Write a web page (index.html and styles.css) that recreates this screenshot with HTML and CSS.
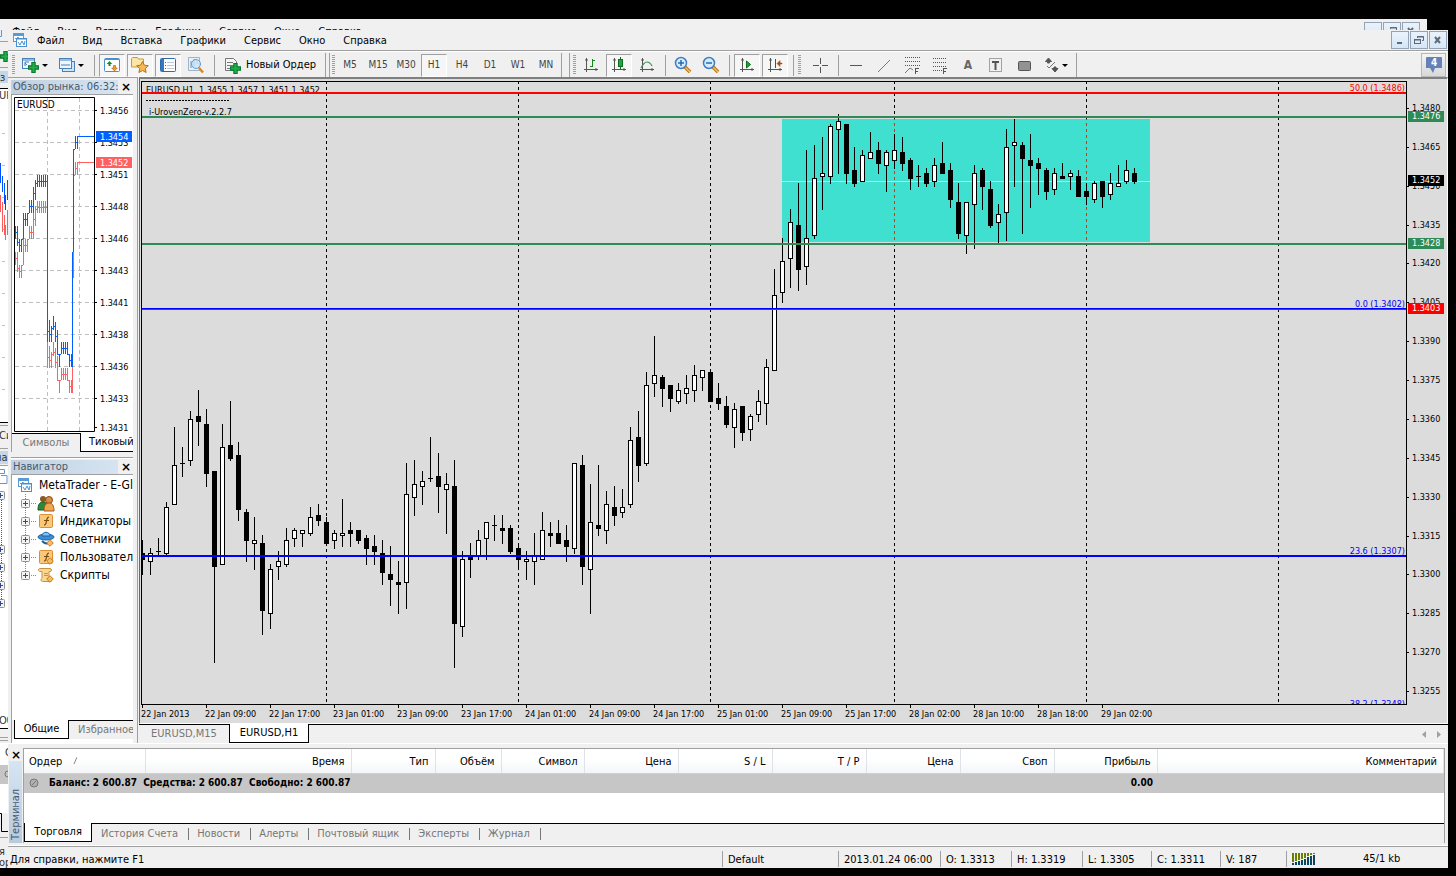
FILE: index.html
```html
<!DOCTYPE html>
<html lang="ru">
<head>
<meta charset="utf-8">
<title>MetaTrader - EURUSD,H1</title>
<link rel="stylesheet" href="styles.css">
</head>
<body>
<svg class="defs" width="0" height="0" aria-hidden="true">
  <defs>
    <symbol id="app" viewBox="0 0 16 16">
      <rect x="1.500" y="1.500" width="10" height="8" fill="#fff" stroke="#5b9bd5"/><path d="M2 3h9" stroke="#5b9bd5" stroke-width="2"/>
      <path d="M3 6l1 1 2-2 1 2" fill="none" stroke="#5b9bd5"/>
      <rect x="4.500" y="6.500" width="10" height="8" fill="#fff" stroke="#4a90d0"/><path d="M5 7h9" stroke="#4a90d0"/>
      <path d="M6 10l2 3 2-4 2 4 1-4" fill="none" stroke="#4a90d0"/>
    </symbol>
    <symbol id="plus" viewBox="0 0 10 10"><path d="M3.500.5h3v3h3v3h-3v3h-3v-3h-3v-3h3z" fill="#1fae4b" stroke="#0b7a2c"/></symbol>
    <symbol id="axes" viewBox="0 0 16 16"><path d="M3.500 1v14M1 12.500h14M2 3h3M13 11v3" fill="none" stroke="#555"/></symbol>
    <symbol id="box" viewBox="0 0 9 9"><rect x=".5" y=".5" width="8" height="8" rx="1" fill="#f4f4f4" stroke="#909090"/><path d="M2 4.500h5M4.500 2v5" stroke="#2b4a9b"/></symbol>
    <symbol id="gold" viewBox="0 0 16 16"><rect x="1.500" y="1.500" width="13" height="13" rx="1" fill="#fbc878" stroke="#d98f35"/><path d="M6 12c2 0 2-2 2.500-4S9 4 11 4M6 7.500h5" fill="none" stroke="#7a4a10" stroke-width="1.200"/></symbol>
    <symbol id="diamond" viewBox="0 0 8 8"><path d="M4 .7L7.300 4 4 7.300.7 4z" fill="#f5bc62" stroke="#c27d26"/></symbol>
  </defs>
</svg>

<div class="desktop">
  <div class="window window-back" aria-hidden="true">
    <div class="back-menu">
      <span>Файл</span><span>Вид</span><span>Вставка</span><span>Графики</span><span>Сервис</span><span>Окно</span><span>Справка</span>
      <div class="win-buttons back-buttons"><i></i><i><svg width="12" height="12" fill="none" stroke="#5d6b7a"><path d="M4.500 4V2.500h6v4H9M4 3h7"/></svg></i><i><svg width="12" height="12"><path d="M3 3l5 6M8 3L3 9" stroke="#5d6b7a" stroke-width="2"/></svg></i></div>
    </div>
    <svg class="back-strip" width="8" height="838" viewBox="0 30 8 838">
      <path fill="#fff" d="M0 88h8v334H0zM0 466h8v262H0zM0 743h8v70H0z"/>
      <path fill="#c5d6e6" d="M0 71h8v12H0zM0 451h8v13H0z"/>
      <path fill="#c6c6c6" d="M0 765h8v19H0z"/>
      <path stroke="#5b9bd5" fill="none" d="M0 28.500h1.500v8H0M0 469.500h4.500v4H0M1 475.500h6v8H0"/>
      <path stroke="#a0a0a0" d="M0 41.500h8M0 67.500h8M0 425.500h8M0 448.500h8M0 465.500h8M0 737.500h8M0 740.500h8M0 837.500h8"/>
      <path stroke="#000" fill="none" d="M0 88.500h8M0 422.500h8M0 728.500h8M0 813.500h1.500v18H8"/>
      <use href="#plus" x="0" y="51" width="11" height="11"/>
      <path stroke="#c0c0c0" d="M2 133.500h3M2 165.500h3M2 197.500h3M2 229.500h3M2 261.500h3M2 293.500h3M2 325.500h3M2 357.500h3M2 389.500h3"/>
      <path stroke="#ff5a5a" fill="none" d="M.5 195v17M2.500 202v30M4.500 215v20M5.500 225v15M7.500 210v25"/>
      <path stroke="#0050ff" fill="none" d="M.5 163v20M2.500 176v16M4.500 183v21M5.500 195v15M7.500 180v20"/>
      <path stroke="#555" stroke-dasharray="1 1" d="M1.500 500v103"/>
      <g><use href="#box" x="-4" y="491" width="9" height="9"/><use href="#box" x="-4" y="545" width="9" height="9"/><use href="#box" x="-4" y="563" width="9" height="9"/><use href="#box" x="-4" y="581" width="9" height="9"/><use href="#box" x="-4" y="599" width="9" height="9"/></g>
      <g class="back-text"><text x="-6" y="81">бз</text><text x="-1" y="99">UR</text><text x="-1" y="439">Си</text><text x="-5" y="461">нав</text><text x="-1" y="724">Об</text><text x="5" y="756">О</text><text x="-1" y="855">я</text><text x="-1" y="866">ор</text></g>
      <circle cx="8" cy="774" r="3" fill="none" stroke="#777"/>
    </svg>
  </div>

  <main class="window window-front">
    <header class="menubar">
      <svg class="app-icon" width="16" height="16"><use href="#app"/></svg>
      <nav class="menu" aria-label="Меню">
        <button>Файл</button><button>Вид</button><button>Вставка</button><button>Графики</button><button>Сервис</button><button>Окно</button><button>Справка</button>
      </nav>
      <div class="win-buttons">
        <button aria-label="Свернуть"><svg width="12" height="12"><path d="M3 9h5" stroke="#5d6b7a" stroke-width="2"/></svg></button>
        <button aria-label="Восстановить"><svg width="12" height="12" fill="none" stroke="#5d6b7a"><path d="M4.500 4V2.500h6v4H9M4 3h7"/><rect x="1.500" y="5.500" width="6" height="4"/><path d="M1 6h7"/></svg></button>
        <button aria-label="Закрыть"><svg width="12" height="12"><path d="M3 3l5 6M8 3L3 9" stroke="#5d6b7a" stroke-width="2"/></svg></button>
      </div>
    </header>

    <div class="toolbar" role="toolbar" aria-label="Инструменты">
      <i class="grip grip-first"></i>
      <button class="tool-drop" aria-label="Новый график"><svg width="18" height="16"><rect x=".5" y="1.500" width="12" height="10" fill="#eef6ff" stroke="#4a80b8"/><path d="M1 3h11" stroke="#4a80b8"/><path d="M3 6l2 2M3 9V5h4" fill="none" stroke="#4a80b8"/><use href="#plus" x="6" y="5" width="11" height="11"/></svg><i class="caret"></i></button>
      <button class="tool-drop" aria-label="Профили"><svg width="18" height="16"><rect x="4.500" y="4.500" width="12" height="10" fill="#cfe4f7" stroke="#4a80b8"/><rect x="1.500" y="1.500" width="12" height="10" fill="#eef6ff" stroke="#4a80b8"/><path d="M2 3h11M3 8h9" stroke="#4a80b8"/></svg><i class="caret"></i></button>
      <i class="sep"></i>
      <button class="tool pressed" aria-label="Обзор рынка"><svg width="16" height="16"><rect x=".5" y="1.500" width="15" height="13" rx="1" fill="#fff" stroke="#4d8fcb"/><path d="M1 2.500h14" stroke="#4d8fcb"/><path d="M5.500 4l2.800 3H6.500v2h-2V7H2.700z" fill="#168a35"/><path d="M10.500 14l2.800-3h-1.800V8.500h-2V11H7.700z" fill="#f0a030" stroke="#a85a10" stroke-width=".6"/></svg></button>
      <button class="tool pressed" aria-label="Навигатор"><svg width="20" height="18"><path d="M1.500 2.500l1-1h5l1 1.500h5v8h-12z" fill="#fbe6a8" stroke="#c99a3c"/><path d="M12.500 5.500l1.800 3.700 4 .5-3 2.800.8 4-3.600-2-3.600 2 .8-4-3-2.800 4-.5z" fill="#f8b850" stroke="#b87020"/></svg></button>
      <button class="tool pressed" aria-label="Терминал"><svg width="16" height="16"><rect x=".5" y="1.500" width="15" height="13" rx="1" fill="#fff" stroke="#2f6aa8"/><path d="M2.500 2v12" stroke="#2f7ac8" stroke-width="3"/><path d="M7 5.500h7M7 8.500h7M7 11.500h7" stroke="#b8c8d8"/><path d="M5 5.500h1M5 8.500h1M5 11.500h1" stroke="#c03030"/></svg></button>
      <button class="tool" aria-label="Тестер"><svg width="18" height="18"><path d="M1.500 1.500h11v13h-11z" fill="#e8f0f8" stroke="#9db4c8"/><path d="M4 5v7M7 3v8M10 4v4" stroke="#7a94ac"/><circle cx="9" cy="8" r="4.500" fill="#c9e4fa" fill-opacity=".8" stroke="#6a9cc8"/><path d="M12 12l4 4.500" stroke="#d58a2a" stroke-width="2.500"/></svg></button>
      <i class="sep"></i>
      <button class="order"><svg width="17" height="17"><path d="M1.500 1.500h8l3 3v9h-11z" fill="#f4f4f4" stroke="#777"/><path d="M3 5.500h6M3 8.500h7M3 11.500h5" stroke="#777"/><use href="#plus" x="6" y="6" width="11" height="11"/></svg><span>Новый Ордер</span></button>
      <i class="band-end"></i>
      <i class="grip"></i>
      <button class="tool">M5</button><button class="tool">M15</button><button class="tool">M30</button><button class="tool pressed">H1</button><button class="tool">H4</button><button class="tool">D1</button><button class="tool">W1</button><button class="tool">MN</button>
      <i class="band-end wide"></i>
      <i class="grip"></i>
      <button class="tool" aria-label="Бары"><svg width="16" height="16"><use href="#axes"/><path d="M9.500 2v8M10 3.500h2M7 9.500h2" stroke="#138a20"/></svg></button>
      <button class="tool pressed" aria-label="Свечи"><svg width="16" height="16"><use href="#axes"/><path d="M9.500 0v12" stroke="#087018"/><rect x="7.500" y="2.500" width="4" height="7" fill="#2f9a60" stroke="#087018"/></svg></button>
      <button class="tool" aria-label="Линия"><svg width="16" height="16"><use href="#axes"/><path d="M2 11c2-4 4-6 6-6s4 2 5 4" fill="none" stroke="#3f8f5a" stroke-width="1.200"/></svg></button>
      <i class="sep"></i>
      <button class="tool" aria-label="Увеличить"><svg width="18" height="18"><path d="M10.500 10.500l5.500 5.500" stroke="#b87018" stroke-width="3.500"/><path d="M11 11l5 5" stroke="#f5c060" stroke-width="1.500"/><circle cx="7" cy="7" r="5.500" fill="#d4ecff" stroke="#3f7fc0" stroke-width="1.500"/><path d="M4 7h6M7 4v6" stroke="#2a68b0" stroke-width="1.500"/></svg></button>
      <button class="tool" aria-label="Уменьшить"><svg width="18" height="18"><path d="M10.500 10.500l5.500 5.500" stroke="#b87018" stroke-width="3.500"/><path d="M11 11l5 5" stroke="#f5c060" stroke-width="1.500"/><circle cx="7" cy="7" r="5.500" fill="#d4ecff" stroke="#3f7fc0" stroke-width="1.500"/><path d="M4 7h6" stroke="#2a68b0" stroke-width="1.500"/></svg></button>
      <i class="sep"></i>
      <button class="tool pressed" aria-label="Автопрокрутка"><svg width="16" height="16"><use href="#axes"/><path d="M7.500 4v7l4-3.500z" fill="#22a038" stroke="#087018"/></svg></button>
      <button class="tool pressed" aria-label="Сдвиг графика"><svg width="16" height="16"><use href="#axes"/><path d="M8.500 2v9" stroke="#1a5a98"/><path d="M10 6.500l3-3v2.500h2v1h-2v2.500z" fill="#a84a10" stroke="#a84a10" stroke-width=".5"/></svg></button>
      <i class="sep"></i>
      <i class="grip grip-draw"></i>
      <button class="tool" aria-label="Перекрестие"><svg width="16" height="16"><path d="M8.500 1v6M8.500 10v6M1 8.500h6M10 8.500h6" stroke="#555"/></svg></button>
      <i class="sep"></i>
      <button class="tool" aria-label="Горизонтальная линия"><svg width="16" height="16"><path d="M2 8.500h12" stroke="#555"/></svg></button>
      <button class="tool" aria-label="Трендовая линия"><svg width="16" height="16"><path d="M2 15L14 3" stroke="#777"/></svg></button>
      <button class="tool" aria-label="Канал"><svg width="17" height="18"><path d="M1 1.500h15M1 5.500h15M1 9.500h15" stroke="#555" stroke-dasharray="1 1"/><path d="M1 17l5-5 3 2" fill="none" stroke="#777"/><path d="M11.500 18v-6M11 12.500h4M11 15.500h3" stroke="#555"/></svg></button>
      <button class="tool" aria-label="Фибоначчи"><svg width="17" height="18"><path d="M1 2.500h13M1 6.500h13M1 10.500h13M1 14.500h9" stroke="#555" stroke-dasharray="1 1"/><path d="M11.500 18v-6M11 12.500h4M11 15.500h3" stroke="#555"/></svg></button>
      <button class="tool letter">A</button>
      <button class="tool" aria-label="Текстовая метка"><svg width="16" height="16"><rect x="1.500" y="1.500" width="12" height="13" fill="none" stroke="#555" stroke-dasharray="1 1"/><path d="M4 5h7M7.500 5v8" stroke="#555" stroke-width="2"/></svg></button>
      <button class="tool" aria-label="Прямоугольник"><svg width="16" height="16"><rect x="2.500" y="4.500" width="12" height="9" rx="1" fill="#929292" stroke="#555"/></svg></button>
      <button class="tool-drop" aria-label="Стрелки"><svg width="18" height="16"><path d="M6.500 1l3 3.500h-2V6h-2V4.500h-2zM13 15l-3-3.500h2V10h2v1.500h2z" fill="#555" stroke="#555"/><path d="M5 9l2 2 6-6" fill="none" stroke="#777"/></svg><i class="caret"></i></button>
      <i class="last-edge"></i>
      <button class="chat" aria-label="Сообщения"><svg width="18" height="18"><path d="M2 1h14a1 1 0 0 1 1 1v10H10l-2 5-3-5H1V2a1 1 0 0 1 1-1z" fill="#6582b8"/><text x="6" y="10" class="chat-num">4</text></svg></button>
    </div>

    <div class="workspace">
      <aside class="side">
        <section class="panel market">
          <div class="panel-head"><h2>Обзор рынка: 06:32:</h2><button class="close" aria-label="Закрыть">×</button></div>
          <div class="panel-body">
            <svg class="ticks" id="ticks" width="121" height="338" viewBox="12 95 121 338"></svg>
            <div class="tabs side-tabs"><button>Символы</button><button class="active">Тиковый</button></div>
          </div>
        </section>
        <section class="panel navigator">
          <div class="panel-head"><h2>Навигатор</h2><button class="close" aria-label="Закрыть">×</button></div>
          <div class="panel-body">
            <ul class="tree">
              <li class="root"><svg width="16" height="16"><use href="#app"/></svg><span>MetaTrader - E-Global</span></li>
              <li><svg width="9" height="9"><use href="#box"/></svg><i class="dots"></i><svg width="18" height="17"><circle cx="6" cy="4" r="3" fill="#8a5a20"/><path d="M1 15c0-6 2-8 5-8s5 2 5 8z" fill="#2a8a3a" stroke="#1a5a20"/><circle cx="12" cy="5" r="3.500" fill="#d89040" stroke="#8a4a10"/><path d="M7 16c0-6 2-8 5-8s5 2 5 8z" fill="#f0a850" stroke="#a05a18"/></svg><span>Счета</span></li>
              <li><svg width="9" height="9"><use href="#box"/></svg><i class="dots"></i><svg width="18" height="16"><use href="#gold" x="1" width="16" height="16"/></svg><span>Индикаторы</span></li>
              <li><svg width="9" height="9"><use href="#box"/></svg><i class="dots"></i><svg width="18" height="16"><ellipse cx="9" cy="6" rx="8" ry="3" fill="#3c8ed8" stroke="#1f62a0"/><path d="M5 5c0-5 8-5 8 0z" fill="#7fc0f5" stroke="#1f62a0"/><path d="M5 10c2 2 4 3 6 2" fill="none" stroke="#1f62a0" stroke-width="2"/><use href="#diamond" x="9" y="8" width="8" height="8"/></svg><span>Советники</span></li>
              <li><svg width="9" height="9"><use href="#box"/></svg><i class="dots"></i><svg width="18" height="16"><use href="#gold" x="1" width="16" height="16"/><use href="#diamond" x="9" y="8" width="8" height="8"/></svg><span>Пользовательские</span></li>
              <li class="last"><svg width="9" height="9"><use href="#box"/></svg><i class="dots"></i><svg width="18" height="16"><path d="M3 1.500h10c2 0 2 3 0 3h-1v7h2v3H6c-2 0-3-2-1-3V4.500H3c-2 0-2-3 0-3z" fill="#fbd890" stroke="#c99040"/><path d="M7 6.500h4M7 8.500h4" stroke="#c99040"/><use href="#diamond" x="9" y="8" width="8" height="8"/></svg><span>Скрипты</span></li>
            </ul>
            <div class="tabs side-tabs nav-tabs"><button class="active">Общие</button><button>Избранное</button></div>
          </div>
        </section>
      </aside>

      <section class="chart-area">
        <div class="chart">
          <svg class="plot" id="plot" role="img" aria-label="EURUSD,H1"></svg>
          <svg class="prices" id="prices"></svg>
          <svg class="dates" id="dates"></svg>
        </div>
        <div class="chart-tabs tabs"><button>EURUSD,M15</button><button class="active">EURUSD,H1</button><i class="fill"></i>
          <svg width="24" height="18"><path d="M6 6v7L2 9.500zM17 6v7l4-3.500z" fill="#a0a0a0"/></svg></div>
      </section>
    </div>

    <section class="terminal">
      <div class="terminal-side"><button class="close" aria-label="Закрыть">×</button><span>Терминал</span></div>
      <div class="terminal-body">
        <table class="orders">
          <colgroup><col class="c121"><col class="c206"><col class="c84"><col class="c66"><col class="c83"><col class="c94"><col class="c94"><col class="c94"><col class="c94"><col class="c94"><col class="c103"><col></colgroup>
          <thead><tr><th class="first">Ордер <svg width="10" height="9"><path d="M2 8l3-7" stroke="#888"/><path d="M5 1l3 7H3" fill="none" stroke="#fff"/></svg></th><th>Время</th><th>Тип</th><th>Объём</th><th>Символ</th><th>Цена</th><th>S / L</th><th>T / P</th><th>Цена</th><th>Своп</th><th>Прибыль</th><th>Комментарий</th></tr></thead>
          <tbody><tr><td colspan="10" class="first"><svg width="10" height="10"><circle cx="5" cy="5" r="4" fill="#b0b0b0" stroke="#777"/><path d="M3 7l4-4" stroke="#777"/></svg><span>Баланс: 2 600.87&nbsp; Средства: 2 600.87&nbsp; Свободно: 2 600.87</span></td><td>0.00</td><td></td></tr></tbody>
        </table>
        <div class="tabs term-tabs"><button class="active">Торговля</button><button>История Счета</button><button>Новости</button><button>Алерты</button><button>Почтовый ящик</button><button>Эксперты</button><button>Журнал</button></div>
      </div>
    </section>

    <footer class="status">
      <span class="help">Для справки, нажмите F1</span><span class="s116">Default</span><span class="s102">2013.01.24 06:00</span><span class="s71">O: 1.3313</span><span class="s71">H: 1.3319</span><span class="s69">L: 1.3305</span><span class="s69">C: 1.3311</span><span class="s66">V: 187</span>
      <span class="net"><svg width="24" height="12" id="signal"></svg><b>45/1 kb</b></span>
    </footer>
  </main>
</div>
<script src="chart.js"></script>
</body>
</html>
```

FILE: styles.css
```css
* { box-sizing: border-box; }
body { margin: 0; background: #000; color: #000; font: 11px/14px "DejaVu Sans Condensed", "Noto Sans", sans-serif; }
button { font: inherit; color: inherit; background: none; border: 0; padding: 0; margin: 0; }
i, b { font-style: normal; font-weight: normal; }
h2 { margin: 0; font: inherit; }
svg { display: block; flex: none; }
.defs { position: absolute; }
.desktop { position: relative; min-height: 100vh; padding: 30px 8px 8px; display: flex; }
.window { background: #f0f0f0; }
.window-back { position: absolute; left: 0; right: 29px; top: 19px; bottom: 8px; overflow: hidden; }
.back-menu { display: flex; height: 11px; gap: 18px; padding: 6px 7px 0 12px; overflow: hidden; }
.back-buttons { margin-left: auto; margin-top: -3px; }
.back-strip { overflow: hidden; }
.back-text { font-size: 11px; fill: #333; }
.window-front { position: relative; flex: 1; min-width: 0; display: flex; flex-direction: column; }

.menubar { display: flex; align-items: center; height: 20px; padding-left: 4px; }
.menu { display: flex; gap: 18px; margin-left: 9px; padding-top: 2px; }
.win-buttons { display: flex; gap: 1px; margin-left: auto; }
.win-buttons button, .win-buttons i { width: 18px; height: 18px; border: 1px solid #93a3b5; background: linear-gradient(#eaf3fc, #d5e6f7); display: grid; place-items: center; color: #5d6b7a; }
.menubar .win-buttons { margin-right: 1px; }

.toolbar { display: flex; align-items: center; height: 27px; padding-top: 2px; border-top: 1px solid #a0a0a0; box-shadow: inset 0 1px #fff; }
.grip { flex: none; width: 5px; height: 20px; background: repeating-linear-gradient(#a0a0a0 0 1px, transparent 1px 2px) 1px 0 / 3px 100% no-repeat; }
.grip-first { width: 10px; background-position: 4px 0; }
.grip-draw { width: 9px; }
.tool { flex: none; width: 26px; height: 23px; margin: 0 1px; border: 1px solid transparent; display: grid; place-items: center; color: #444; font-size: 10px; }
.tool.pressed { border-color: #a0a0a0 #fff #fff #a0a0a0; background: #f6f6f6; }
.tool.letter { font-size: 12px; font-weight: bold; color: #666; }
.tool-drop { flex: none; width: 36px; height: 23px; padding-left: 4px; display: flex; align-items: center; gap: 2px; }
.caret { border: 3px solid transparent; border-top-color: #000; border-bottom: 0; }
.sep { flex: none; width: 8px; height: 21px; background: linear-gradient(#a0a0a0, #a0a0a0) 4px 0 / 1px 100% no-repeat; }
.order { flex: none; width: 107px; height: 23px; padding-left: 6px; display: flex; align-items: center; gap: 5px; white-space: nowrap; }
.band-end { flex: none; width: 5px; height: 25px; border: solid #a0a0a0; border-width: 0 1px; margin-right: 1px; }
.band-end.wide { width: 9px; margin: 0 2px 0 1px; }
.last-edge { width: 1px; height: 25px; background: #a0a0a0; margin-left: 2px; }
.chat { width: 25px; height: 24px; margin-left: auto; margin-right: 2px; border: 1px solid #b8b8b8; background: linear-gradient(#f4f4f4, #d8d8d8); display: grid; place-items: center; }
.chat-num { font: bold 10px "DejaVu Sans Condensed", "Noto Sans", sans-serif; fill: #fff; }

.workspace { flex: 1; display: flex; min-height: 0; }
.side { flex: none; width: 129px; display: flex; flex-direction: column; border-top: 1px solid #a0a0a0; padding: 1px 4px 0 3px; }
.panel { display: flex; flex-direction: column; }
.navigator { flex: 1; border-top: 1px solid #a0a0a0; box-shadow: inset 0 1px #fff; padding-top: 1px; }
.market { height: 378px; }
.panel-head { display: flex; height: 15px; align-items: center; color: #475a6d; }
.panel-head h2 { flex: 1; background: linear-gradient(90deg, #c0d0e0, #d6e4f2); line-height: 14px; padding-left: 2px; white-space: nowrap; overflow: hidden; }
.close { width: 14px; color: #000; font: bold 12px/12px "DejaVu Sans", sans-serif; text-align: center; }
.panel-head .close { margin-left: 1px; }
.panel-body { flex: none; background: #fff; border-top: 1px solid #a0a0a0; border-left: 1px solid #a0a0a0; overflow: hidden; }
.navigator .panel-body { flex: 1; display: flex; flex-direction: column; }
.tabs { display: flex; color: #777; background: #f0f0f0; white-space: nowrap; }
.tabs button { border-top: 1px solid #000; padding: 0 12px; }
.tabs .active { color: #000; background: #fff; border: 1px solid #000; border-top: 0; }
.side-tabs { height: 19px; }
.tabs.side-tabs button { padding-top: 2px; }
.side-tabs button:first-child { width: 68px; flex: none; padding: 0; }
.side-tabs .active:last-child { padding: 0 8px; border-right: 0; }
.nav-tabs { margin-bottom: 4px; border-left: 2px solid #f0f0f0; }
.nav-tabs button:first-child { width: 55px; }
.nav-tabs button:last-child { padding: 0 9px; flex: 1; }
.tree { list-style: none; margin: 0; padding: 0; flex: 1; font-size: 12px; white-space: nowrap; overflow: hidden; }
.tree li { display: flex; align-items: center; height: 18px; padding-left: 9px; gap: 1px; background: repeating-linear-gradient(#888 0 1px, transparent 1px 2px) 13px 0 / 1px 100% no-repeat; }
.tree .last { background-size: 1px 9px; }
.tree .root { padding-left: 5px; background: none; gap: 5px; height: 19px; }
.tree span { flex: none; padding-left: 1px; }
.dots { flex: none; width: 5px; height: 1px; background: repeating-linear-gradient(90deg, #888 0 1px, transparent 1px 2px); }
.tree li:not(.root) span { padding-left: 4px; }

.chart-area { flex: 1; min-width: 0; display: flex; flex-direction: column; border-left: 1px solid #a0a0a0; padding-left: 1px; }
.chart { flex: 1; display: grid; grid-template: 1fr 18px / minmax(0, 1fr) 40px; background: #dcdcdc; border: solid #696969; border-width: 2px 0 0 1px; border-right: 1px solid #fff; border-bottom: 1px solid #fff; padding: 2px 0 0 1px; border-top-color: #808080; }
.plot { width: 100%; height: 100%; min-height: 624px; border: 1px solid #000; overflow: hidden; }
.prices { width: 40px; height: 100%; overflow: visible; }
.dates { width: 100%; height: 18px; overflow: visible; }
.axis, .plot text { font: 9px "DejaVu Sans Condensed", "Noto Sans", sans-serif; }
.chart-tabs { height: 19px; }
.chart-tabs button { height: 19px; width: 90px; padding: 0; }
.chart-tabs .active { width: 80px; }
.chart-tabs .fill { flex: 1; border-top: 1px solid #000; }
.chart-tabs svg { width: 36px; border-top: 1px solid #000; height: 19px; padding-left: 8px; }

.terminal { display: flex; height: 103px; border-top: 1px solid #fff; border-bottom: 1px solid #fff; padding: 4px 3px 2px 1px; }
.terminal-side { flex: none; width: 14px; display: flex; flex-direction: column; align-items: center; }
.terminal-side .close { height: 13px; line-height: 12px; }
.terminal-side span { flex: 1; width: 13px; line-height: 13px; writing-mode: vertical-rl; transform: rotate(180deg); background: linear-gradient(#b8cadd, #d6e5f3); color: #475a6d; padding-top: 3px; margin-right: 1px; }
.terminal-body { flex: 1; min-width: 0; display: flex; flex-direction: column; background: #fff; border: 1px solid #a0a0a0; border-width: 1px 1px 0; }
.orders { width: 100%; border-collapse: collapse; table-layout: fixed; margin-bottom: auto; }
.orders th { height: 24px; padding: 2px 6px 0 0; font-weight: normal; text-align: right; border-right: 1px solid #dfe2e6; border-bottom: 1px solid #d0d0d0; background: linear-gradient(#fff 40%, #f3f5f7); white-space: nowrap; }
.orders .first { text-align: left; padding-left: 5px; }
.orders th svg { display: inline-block; margin-left: 7px; }
.orders td { height: 20px; padding: 0 4px 0 0; background: #c6c6c6; font-size: 10px; font-weight: bold; text-align: right; white-space: nowrap; }
.orders td svg { display: inline-block; margin-right: 10px; vertical-align: -2px; }
.c121 { width: 121px; } .c206 { width: 206px; } .c84 { width: 84px; } .c66 { width: 66px; } .c83 { width: 83px; } .c94 { width: 94px; } .c103 { width: 103px; }
.term-tabs { height: 20px; border-top: 1px solid #000; align-items: center; }
.term-tabs button { border: 0; border-right: 1px solid #777; line-height: 12px; padding: 0 10px 0 8px; }
.term-tabs .active { height: 19px; width: 68px; padding: 0; margin: -1px 1px 0 0; border: 1px solid #000; border-top: 0; align-self: flex-start; }

.status { display: flex; align-items: center; height: 22px; padding-top: 2px; border-top: 1px solid #a0a0a0; white-space: nowrap; }
.status span { flex: none; height: 16px; line-height: 18px; padding-left: 5px; border-left: 1px solid #a0a0a0; }
.status .help { flex: 1; padding-left: 2px; border: 0; }
.status .s116 { width: 116px; } .status .s102 { width: 102px; } .status .s71 { width: 71px; } .status .s69 { width: 69px; } .status .s66 { width: 66px; }
.status .net { width: 162px; display: flex; align-items: center; gap: 47px; }
```

FILE: chart.js
```js
const LEFT = 142, TOP = 82;

// high, body top, body bottom, low, filled
const candles = [
[540,553,560,575,1],[548,553,562,575,0],[538,551,552,556,1],[502,507,554,555,0],[427,465,505,505,0],
[447,463,464,477,1],[411,419,461,466,0],[390,416,422,446,1],[409,424,474,487,1],[471,471,567,663,1],
[424,447,565,565,0],[401,445,459,461,1],[442,455,510,521,1],[509,512,541,562,1],[517,540,544,570,0],
[535,543,611,635,1],[564,569,614,629,0],[551,561,567,580,0],[528,540,565,567,0],[528,530,539,547,0],
[530,530,534,547,0],[507,517,534,536,0],[504,515,521,526,1],[517,522,544,544,1],[530,533,541,549,0],
[499,533,536,547,0],[522,530,534,547,1],[530,530,541,544,1],[535,538,549,565,1],[535,546,552,565,1],
[540,553,573,585,1],[546,574,580,606,1],[561,582,585,614,1],[463,494,583,609,0],[460,484,498,516,0],
[471,481,487,505,0],[437,478,479,482,1],[453,476,487,513,1],[473,484,490,534,0],[460,486,624,668,1],
[551,559,627,637,0],[543,556,560,578,1],[530,540,556,560,0],[522,522,539,560,0],[515,525,526,541,1],
[515,528,531,544,1],[525,528,552,554,1],[543,548,560,570,1],[551,559,562,580,0],[533,556,562,585,0],
[512,530,560,560,0],[522,533,536,547,1],[520,533,544,544,1],[525,540,547,562,1],[463,463,549,554,0],
[455,465,567,585,1],[484,522,570,614,0],[465,525,529,536,1],[491,504,531,544,0],[486,507,516,526,1],
[489,507,513,518,0],[427,440,505,508,0],[411,437,466,482,1],[372,385,464,466,0],[336,375,384,397,0],
[375,377,389,407,1],[385,385,399,412,1],[383,390,402,404,0],[375,388,394,404,0],[365,375,391,402,0],
[370,370,378,391,0],[369,372,402,402,1],[383,398,404,410,1],[396,406,425,428,1],[403,409,428,448,0],
[406,406,433,441,1],[414,416,430,441,0],[390,401,415,422,0],[359,367,404,425,0],[269,295,371,371,0],
[238,261,293,303,0],[209,222,259,288,0],[183,225,270,291,1],[150,238,267,285,0],[145,178,236,239,0],
[137,173,177,210,0],[124,126,177,184,0],[114,121,130,174,0],[124,124,174,184,1],[147,170,184,187,1],
[150,155,182,182,0],[132,152,159,159,0],[142,150,164,174,1],[150,152,166,192,0],[134,150,161,169,0],
[137,152,164,171,1],[158,160,179,190,1],[165,176,177,187,1],[168,173,184,187,1],[158,165,182,187,0],
[142,163,174,174,1],[163,170,200,208,1],[183,202,234,239,1],[202,202,236,254,0],[165,173,205,249,0],
[168,170,187,210,1],[181,189,226,228,1],[204,214,223,243,0],[129,147,213,241,0],[119,142,146,187,0],
[142,145,159,234,1],[134,160,166,208,1],[158,163,169,195,1],[168,170,192,200,1],[168,173,190,195,0],
[163,176,179,179,1],[170,173,177,190,0],[170,176,197,197,1],[183,191,197,205,1],[181,183,200,203,0],
[181,181,197,208,1],[173,183,195,200,0],[165,183,187,187,0],[160,170,182,184,0],[168,173,182,184,1]
];

const rect = (x, y, w, h, fill) => `<rect x="${x}" y="${y}" width="${w}" height="${h}" fill="${fill}"/>`;
const vdash = (x, y1, y2, color, offset) =>
  `<path d="M${x + 0.5} ${y1}V${y2}" stroke="${color}" stroke-dasharray="3 3" stroke-dashoffset="${offset}"/>`;

const sessions = [326, 518, 710, 894, 1086, 1278].map(x => x - LEFT);
let plot = sessions.map(x => vdash(x, 0, 2000, "#000", 1)).join("");
plot += rect(782 - LEFT, 119 - TOP, 368, 123, "#40e0d0");
plot += sessions.slice(3, 5).map(x => vdash(x, 37, 160, "#a8481c", 2)).join("");
plot += rect(782 - LEFT, 181 - TOP, 368, 1, "#c4e4e0");
candles.forEach(([h, t, b, l, filled], i) => {
  const x = i * 8;
  plot += rect(x, h - TOP, 1, l - h, "#000") + rect(x - 2, t - TOP, 5, b - t, "#000");
  if (!filled) plot += rect(x - 1, t - TOP + 1, 3, b - t - 2, "#fff");
});
plot += `<text x="4" y="11">EURUSD,H1&#160; 1.3455 1.3457 1.3451 1.3452</text>`;
plot += `<path d="M4 18.500H88" stroke="#000" stroke-dasharray="2 1"/>`;
plot += `<text x="7" y="33">i-UrovenZero-v.2.2.7</text>`;
plot += [[92, 2, "#f00"], [116, 2, "#2e8b57"], [243, 2, "#2e8b57"], [308, 1, "#00f"], [309, 1, "#f00"], [555, 2, "#00f"]]
  .map(([y, h, c]) => rect(0, y - TOP, "100%", h, c)).join("");
plot += [[91, "50.0 (1.3486)", "#f00"], [307, "0.0 (1.3402)", "#00f"], [554, "23.6 (1.3307)", "#00f"], [707, "38.2 (1.3248)", "#00f"]]
  .map(([y, t, c]) => `<svg x="100%" overflow="visible"><text x="-1" y="${y - TOP}" text-anchor="end" fill="${c}">${t}</text></svg>`).join("");
document.getElementById("plot").innerHTML = plot;

let prices = "";
for (let k = 0; k < 16; k++) {
  const y = Math.round(108 + k * 38.87) - 81;
  prices += rect(0, y, 2, 1, "#000") + `<text class="axis" x="5" y="${y + 3}">${(1.348 - k * 0.0015).toFixed(4)}</text>`;
}
[[116, "1.3476", "#2e8b57"], [180, "1.3452", "#000"], [243, "1.3428", "#2e8b57"], [308, "1.3403", "#f00"]].forEach(([y, t, c]) => {
  prices += rect(1, y - 81 - 5, 36, 11, c) + `<text class="axis" x="5" y="${y - 78}" fill="#fff">${t}</text>`;
});
document.getElementById("prices").innerHTML = prices;

document.getElementById("dates").innerHTML = ["22 Jan 2013", "22 Jan 09:00", "22 Jan 17:00", "23 Jan 01:00", "23 Jan 09:00",
  "23 Jan 17:00", "24 Jan 01:00", "24 Jan 09:00", "24 Jan 17:00", "25 Jan 01:00", "25 Jan 09:00", "25 Jan 17:00",
  "28 Jan 02:00", "28 Jan 10:00", "28 Jan 18:00", "29 Jan 02:00"]
  .map((t, i) => rect(1 + i * 64, 0, 1, 3, "#000") + `<text class="axis" x="${i * 64}" y="12">${t}</text>`).join("");

// Tick chart: x, top and bottom of each swing; the bid runs one spread below the ask
const swings = [[15,226,239],[17,226,246],[19,239,252],[21,239,252],[23,213,239],[25,213,226],[27,213,226],
  [29,200,213],[31,200,213],[33,187,213],[35,180,200],[37,175,187],[39,175,187],[41,175,187],[43,175,187],
  [45,175,187],[47,175,342],[49,320,342],[51,326,342],[53,316,330],[55,322,342],[57,330,355],[59,354,367],
  [61,342,354],[63,342,354],[65,342,354],[67,342,354],[69,354,367],[71,354,367],[72,252,367],[73,149,252],
  [75,136,149],[77,136,149]];
const swingLine = (dy, color) => swings.map(([x, t, b], i) => {
  const next = swings[i + 1];
  const mid = next ? (Math.max(t, next[1]) + Math.min(b, next[2])) / 2 | 0 : 136;
  return rect(x, t + dy, 1, b - t, color) + rect(x, mid + dy, next ? next[0] - x : 94 - x, 1, color);
}).join("");
let ticks = `<path d="M14.500 97.500H94.500V431.500H14.500z" fill="#fff" stroke="#000"/>`;
ticks += `<g stroke="#c0c0c0" stroke-dasharray="4 3"><path d="M47.500 98V431M79.500 98V431"/>`;
for (let k = 0; k < 10; k++) ticks += `<path d="M15 ${110.5 + k * 32}H94"/>`;
ticks += `</g>` + swingLine(26, "#ff6060") + swingLine(0, "#0060ff");
["1.3456", "1.3453", "1.3451", "1.3448", "1.3446", "1.3443", "1.3441", "1.3438", "1.3436", "1.3433", "1.3431"].forEach((t, k) => {
  const y = k === 10 ? 427 : 110 + k * 32;
  ticks += rect(95, y, 2, 1, "#000") + `<text class="axis" x="100" y="${y + 4}">${t}</text>`;
});
[[136, "1.3454", "#0060ff"], [162, "1.3452", "#ff6060"]].forEach(([y, t, c]) => {
  ticks += rect(96, y - 5, 36, 11, c) + `<text class="axis" x="100" y="${y + 4}" fill="#fff">${t}</text>`;
});
ticks += `<text x="17" y="108" font-size="10">EURUSD</text>`;
document.getElementById("ticks").innerHTML = ticks;

let signal = "";
for (let k = 0; k < 8; k++) {
  const h = Math.max(2, Math.round(2 + k * 1.1));
  signal += rect(k * 3, 0, 2, 11 - h, "#6b7f00") + rect(k * 3, 12 - h, 2, h, "#0b4560");
}
document.getElementById("signal").innerHTML = signal;
```
